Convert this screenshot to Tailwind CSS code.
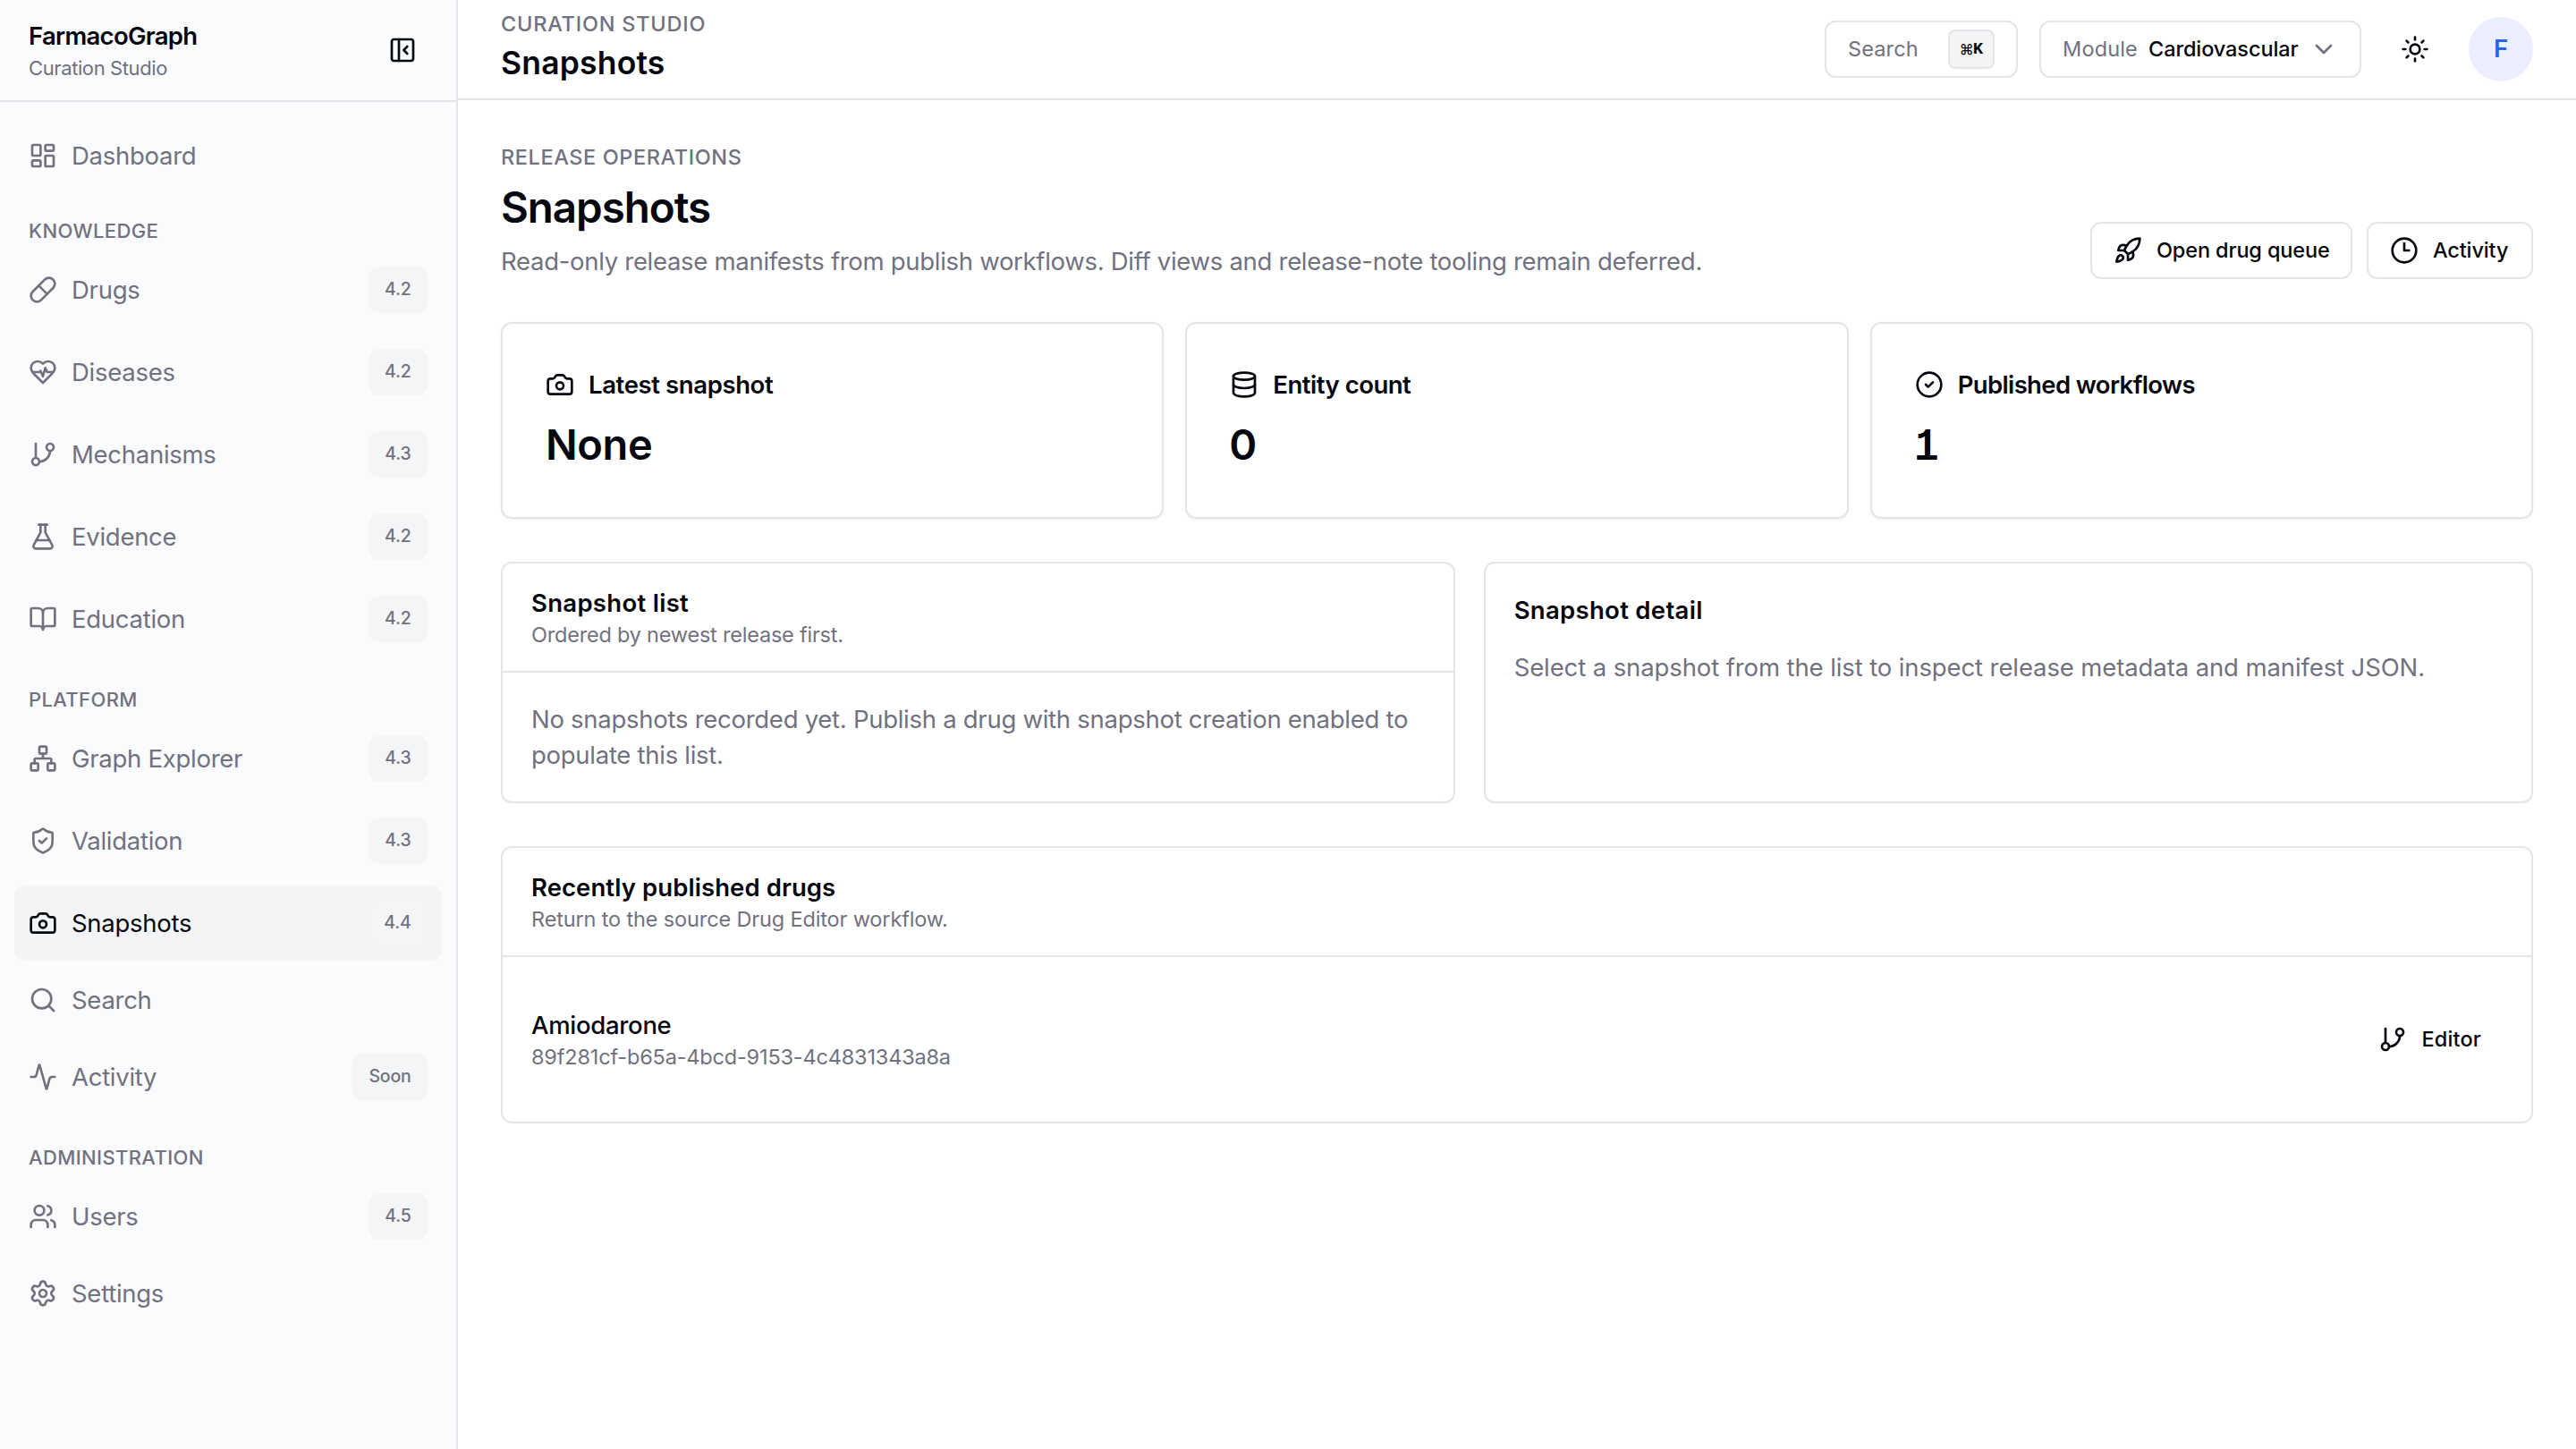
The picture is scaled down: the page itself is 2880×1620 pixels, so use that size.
<!DOCTYPE html>
<html lang="en">
<head>
    <meta charset="UTF-8">
    <title>Snapshots - FarmacoGraph</title>
    <script src="https://cdn.jsdelivr.net/npm/@tailwindcss/browser@4"></script>
</head>
<body class="bg-white text-[#05070f] font-['Inter','Liberation_Sans',sans-serif] antialiased">

<!-- icon sprite -->
<svg class="hidden" xmlns="http://www.w3.org/2000/svg">
    <symbol id="i-dashboard" viewBox="0 0 24 24"><rect x="3" y="3" width="7" height="9" rx="1"/><rect x="14" y="3" width="7" height="5" rx="1"/><rect x="14" y="12" width="7" height="9" rx="1"/><rect x="3" y="16" width="7" height="5" rx="1"/></symbol>
    <symbol id="i-pill" viewBox="0 0 24 24"><path d="m10.5 20.5 10-10a4.95 4.95 0 1 0-7-7l-10 10a4.95 4.95 0 1 0 7 7Z"/><path d="m8.5 8.5 7 7"/></symbol>
    <symbol id="i-heart" viewBox="0 0 24 24"><path d="M19 14c1.49-1.46 3-3.21 3-5.5A5.5 5.5 0 0 0 16.5 3c-1.76 0-3 .5-4.5 2-1.5-1.5-2.74-2-4.5-2A5.5 5.5 0 0 0 2 8.5c0 2.3 1.5 4.05 3 5.5l7 7Z"/><path d="M3.22 12H9.5l.5-1 2 4.5 2-7 1.5 3.5h5.27"/></symbol>
    <symbol id="i-branch" viewBox="0 0 24 24"><path d="M6 3v12"/><circle cx="18" cy="6" r="3"/><circle cx="6" cy="18" r="3"/><path d="M18 9a9 9 0 0 1-9 9"/></symbol>
    <symbol id="i-flask" viewBox="0 0 24 24"><path d="M14 2v6a2 2 0 0 0 .245.96l5.51 10.08A2 2 0 0 1 18 22H6a2 2 0 0 1-1.755-2.96l5.51-10.08A2 2 0 0 0 10 8V2"/><path d="M6.453 15h11.094"/><path d="M8.5 2h7"/></symbol>
    <symbol id="i-book" viewBox="0 0 24 24"><path d="M12 7v14"/><path d="M3 18a1 1 0 0 1-1-1V4a1 1 0 0 1 1-1h5a4 4 0 0 1 4 4 4 4 0 0 1 4-4h5a1 1 0 0 1 1 1v13a1 1 0 0 1-1 1h-6a3 3 0 0 0-3 3 3 3 0 0 0-3-3z"/></symbol>
    <symbol id="i-network" viewBox="0 0 24 24"><rect x="16" y="16" width="6" height="6" rx="1"/><rect x="2" y="16" width="6" height="6" rx="1"/><rect x="9" y="2" width="6" height="6" rx="1"/><path d="M5 16v-3a1 1 0 0 1 1-1h12a1 1 0 0 1 1 1v3"/><path d="M12 12V8"/></symbol>
    <symbol id="i-shield" viewBox="0 0 24 24"><path d="M20 13c0 5-3.5 7.5-7.66 8.95a1 1 0 0 1-.67-.01C7.5 20.5 4 18 4 13V6a1 1 0 0 1 1-1c2 0 4.5-1.2 6.24-2.72a1.17 1.17 0 0 1 1.52 0C14.51 3.81 17 5 19 5a1 1 0 0 1 1 1z"/><path d="m9 12 2 2 4-4"/></symbol>
    <symbol id="i-camera" viewBox="0 0 24 24"><path d="M13.997 4a2 2 0 0 1 1.76 1.05l.486.9A2 2 0 0 0 18.003 7H20a2 2 0 0 1 2 2v9a2 2 0 0 1-2 2H4a2 2 0 0 1-2-2V9a2 2 0 0 1 2-2h1.997a2 2 0 0 0 1.759-1.048l.489-.904A2 2 0 0 1 10.004 4z"/><circle cx="12" cy="13" r="3"/></symbol>
    <symbol id="i-search" viewBox="0 0 24 24"><circle cx="11" cy="11" r="8"/><path d="m21 21-4.34-4.34"/></symbol>
    <symbol id="i-activity" viewBox="0 0 24 24"><path d="M22 12h-2.48a2 2 0 0 0-1.93 1.46l-2.35 8.36a.25.25 0 0 1-.48 0L9.24 2.18a.25.25 0 0 0-.48 0l-2.35 8.36A2 2 0 0 1 4.49 12H2"/></symbol>
    <symbol id="i-users" viewBox="0 0 24 24"><path d="M16 21v-2a4 4 0 0 0-4-4H6a4 4 0 0 0-4 4v2"/><path d="M16 3.128a4 4 0 0 1 0 7.744"/><path d="M22 21v-2a4 4 0 0 0-3-3.87"/><circle cx="9" cy="7" r="4"/></symbol>
    <symbol id="i-settings" viewBox="0 0 24 24"><path d="M9.671 4.136a2.34 2.34 0 0 1 4.659 0 2.34 2.34 0 0 0 3.319 1.915 2.34 2.34 0 0 1 2.33 4.033 2.34 2.34 0 0 0 0 3.831 2.34 2.34 0 0 1-2.33 4.033 2.34 2.34 0 0 0-3.319 1.915 2.34 2.34 0 0 1-4.659 0 2.34 2.34 0 0 0-3.32-1.915 2.34 2.34 0 0 1-2.33-4.033 2.34 2.34 0 0 0 0-3.831A2.34 2.34 0 0 1 6.35 6.051a2.34 2.34 0 0 0 3.319-1.915"/><circle cx="12" cy="12" r="3"/></symbol>
    <symbol id="i-panel" viewBox="0 0 24 24"><rect x="3" y="3" width="18" height="18" rx="2"/><path d="M9 3v18"/><path d="m16 15-3-3 3-3"/></symbol>
    <symbol id="i-chevron" viewBox="0 0 24 24"><path d="m6 9 6 6 6-6"/></symbol>
    <symbol id="i-sun" viewBox="0 0 24 24"><circle cx="12" cy="12" r="4"/><path d="M12 2v2"/><path d="M12 20v2"/><path d="m4.93 4.93 1.41 1.41"/><path d="m17.66 17.66 1.41 1.41"/><path d="M2 12h2"/><path d="M20 12h2"/><path d="m6.34 17.66-1.41 1.41"/><path d="m19.07 4.93-1.41 1.41"/></symbol>
    <symbol id="i-rocket" viewBox="0 0 24 24"><path d="M4.5 16.5c-1.5 1.26-2 5-2 5s3.74-.5 5-2c.71-.84.7-2.13-.09-2.91a2.18 2.18 0 0 0-2.91-.09z"/><path d="m12 15-3-3a22 22 0 0 1 2-3.95A12.88 12.88 0 0 1 22 2c0 2.72-.78 7.5-6 11a22.35 22.35 0 0 1-4 2z"/><path d="M9 12H4s.55-3.03 2-4c1.62-1.08 5 0 5 0"/><path d="M12 15v5s3.03-.55 4-2c1.08-1.62 0-5 0-5"/></symbol>
    <symbol id="i-clock" viewBox="0 0 24 24"><circle cx="12" cy="12" r="10"/><path d="M12 6v6h4"/></symbol>
    <symbol id="i-database" viewBox="0 0 24 24"><ellipse cx="12" cy="5" rx="9" ry="3"/><path d="M3 5v14a9 3 0 0 0 18 0V5"/><path d="M3 12a9 3 0 0 0 18 0"/></symbol>
    <symbol id="i-check" viewBox="0 0 24 24"><circle cx="12" cy="12" r="10"/><path d="m9 12 2 2 4-4"/></symbol>
</svg>

<div class="flex h-screen overflow-hidden">
    <aside class="w-[512px] shrink-0 border-r-2 border-[#e4e5e8] bg-[#fafbfd]">
        <div class="flex h-[114px] items-center justify-between border-b-2 border-[#e4e5e8] px-8">
            <div>
                <p class="text-[27.5px] leading-10 font-semibold tracking-[-0.026em]">FarmacoGraph</p>
                <p class="text-[22px] leading-8 tracking-[-0.018em] text-[#71717f]">Curation Studio</p>
            </div>
            <button class="flex size-14 items-center justify-center">
                <svg class="size-8 fill-none stroke-current stroke-2 [stroke-linecap:round] [stroke-linejoin:round]"><use href="#i-panel"/></svg>
            </button>
        </div>
        <nav id="nav" class="px-4 pt-6"></nav>
    </aside>

    <div class="min-w-0 flex-1">
        <header class="flex h-28 items-center justify-between border-b-2 border-[#e4e5e8] px-12">
            <div>
                <p class="text-[23.5px] leading-8 font-medium tracking-[0.033em] text-[#71717f]">CURATION STUDIO</p>
                <p class="text-[35.5px] leading-[56px] font-semibold tracking-[0.005em]">Snapshots</p>
            </div>
            <div class="flex items-center gap-6">
                <button class="flex h-16 w-[216px] items-center justify-between rounded-xl border-2 border-[#e4e5e8] px-6 text-[23.5px] tracking-[0.005em] text-[#71717f]">
                    Search
                    <kbd class="flex h-11 w-[52px] items-center justify-center rounded-lg border-2 border-[#e4e5e8] bg-[#f3f4f6] font-['Inter',sans-serif] text-[19px] font-medium text-[#05070f]"><span class="-mr-px font-['Noto_Sans','Inter',sans-serif] text-[16px]">⌘</span><span class="font-['Liberation_Mono',monospace] font-bold">K</span></kbd>
                </button>
                <button class="flex h-16 w-[360px] items-center rounded-xl border-2 border-[#e4e5e8] px-6 text-[23.5px]">
                    <span class="tracking-[0.007em] text-[#71717f]">Module</span>
                    <span class="ml-3 font-medium tracking-[-0.004em]">Cardiovascular</span>
                    <svg class="ml-auto size-8 fill-none stroke-[#71717f] stroke-2 [stroke-linecap:round] [stroke-linejoin:round]"><use href="#i-chevron"/></svg>
                </button>
                <button class="flex size-18 items-center justify-center">
                    <svg class="size-8 fill-none stroke-current stroke-2 [stroke-linecap:round] [stroke-linejoin:round]"><use href="#i-sun"/></svg>
                </button>
                <div class="flex size-18 items-center justify-center rounded-full bg-[#ebeffd] text-[27.5px] font-semibold text-[#2463eb]">F</div>
            </div>
        </header>

        <main class="p-12">
            <div class="flex items-end justify-between">
                <div>
                    <p class="text-[23.5px] leading-8 font-medium tracking-[0.025em] text-[#71717f]">RELEASE OPERATIONS</p>
                    <h1 class="mt-2 text-[47.5px] leading-[63px] font-semibold tracking-[-0.022em]">Snapshots</h1>
                    <p class="mt-[9px] text-[27.5px] leading-10 tracking-[-0.0108em] text-[#71717f]">Read-only release manifests from publish workflows. Diff views and release-note tooling remain deferred.</p>
                </div>
                <div class="flex gap-4">
                    <button class="flex h-16 w-[293px] items-center gap-4 rounded-xl border-2 border-[#e4e5e8] px-6 text-[23.5px] font-medium tracking-[-0.006em] whitespace-nowrap">
                        <svg class="size-8 shrink-0 fill-none stroke-current stroke-2 [stroke-linecap:round] [stroke-linejoin:round]"><use href="#i-rocket"/></svg>
                        Open drug queue
                    </button>
                    <button class="flex h-16 w-[186px] items-center gap-4 rounded-xl border-2 border-[#e4e5e8] px-6 text-[23.5px] font-medium tracking-[-0.006em] whitespace-nowrap">
                        <svg class="size-8 shrink-0 fill-none stroke-current stroke-2 [stroke-linecap:round] [stroke-linejoin:round]"><use href="#i-clock"/></svg>
                        Activity
                    </button>
                </div>
            </div>

            <div class="mt-12 grid grid-cols-3 gap-6">
                <div class="h-[220px] rounded-xl border-2 border-[#e4e5e8] p-12 shadow-sm shadow-black/5">
                    <div class="flex items-center gap-4">
                        <svg class="size-8 fill-none stroke-current stroke-2 [stroke-linecap:round] [stroke-linejoin:round]"><use href="#i-camera"/></svg>
                        <h3 class="text-[27.5px] leading-10 font-semibold tracking-[-0.014em]">Latest snapshot</h3>
                    </div>
                    <p class="mt-4 text-[47px] leading-[62px] font-semibold tracking-[-0.008em]">None</p>
                </div>
                <div class="h-[220px] rounded-xl border-2 border-[#e4e5e8] p-12 shadow-sm shadow-black/5">
                    <div class="flex items-center gap-4">
                        <svg class="size-8 fill-none stroke-current stroke-2 [stroke-linecap:round] [stroke-linejoin:round]"><use href="#i-database"/></svg>
                        <h3 class="text-[27.5px] leading-10 font-semibold tracking-[-0.018em]">Entity count</h3>
                    </div>
                    <p class="mt-4 text-[47px] leading-[62px] font-semibold"><span class="-ml-px">0</span></p>
                </div>
                <div class="h-[220px] rounded-xl border-2 border-[#e4e5e8] p-12 shadow-sm shadow-black/5">
                    <div class="flex items-center gap-4">
                        <svg class="size-8 fill-none stroke-current stroke-2 [stroke-linecap:round] [stroke-linejoin:round]"><use href="#i-check"/></svg>
                        <h3 class="text-[27.5px] leading-10 font-semibold tracking-[-0.023em]">Published workflows</h3>
                    </div>
                    <p class="mt-4 text-[47px] leading-[62px] font-semibold [font-feature-settings:'cv01','ss01','tnum']"><span class="-ml-0.5">1</span></p>
                </div>
            </div>

            <div class="mt-12 grid grid-cols-[1fr_1.1fr] gap-8">
                <section class="rounded-xl border-2 border-[#e4e5e8]">
                    <div class="border-b-2 border-[#e4e5e8] px-8 py-6">
                        <h2 class="text-[27.5px] leading-10 font-semibold tracking-[0.011em]">Snapshot list</h2>
                        <p class="text-[23.5px] leading-8 tracking-[-0.009em] text-[#71717f]">Ordered by newest release first.</p>
                    </div>
                    <p class="p-8 text-[27.5px] leading-10 tracking-[-0.01em] text-[#71717f]">No snapshots recorded yet. Publish a drug with snapshot creation enabled to populate this list.</p>
                </section>
                <section class="rounded-xl border-2 border-[#e4e5e8] p-8">
                    <h2 class="text-[27.5px] leading-10 font-semibold tracking-[0.011em]">Snapshot detail</h2>
                    <p class="mt-6 text-[27.5px] leading-10 tracking-[-0.004em] text-[#71717f]">Select a snapshot from the list to inspect release metadata and manifest JSON.</p>
                </section>
            </div>

            <section class="mt-12 rounded-xl border-2 border-[#e4e5e8]">
                <div class="border-b-2 border-[#e4e5e8] px-8 py-6">
                    <h2 class="text-[27.5px] leading-10 font-semibold tracking-[0.003em]">Recently published drugs</h2>
                    <p class="text-[23.5px] leading-8 tracking-[-0.006em] text-[#71717f]">Return to the source Drug Editor workflow.</p>
                </div>
                <div class="flex items-center justify-between px-8 py-14">
                    <div>
                        <p class="text-[27.5px] leading-10 font-medium tracking-[-0.011em]">Amiodarone</p>
                        <p class="text-[23.5px] leading-8 tracking-[-0.0075em] text-[#71717f]">89f281cf-b65a-4bcd-9153-4c4831343a8a</p>
                    </div>
                    <button class="flex h-16 items-center gap-4 px-6 text-[23.5px] font-medium tracking-[0.006em]">
                        <svg class="size-8 fill-none stroke-current stroke-2 [stroke-linecap:round] [stroke-linejoin:round]"><use href="#i-branch"/></svg>
                        Editor
                    </button>
                </div>
            </section>
        </main>
    </div>
</div>

<script>
    const groups = [
        { items: [{ icon: 'dashboard', label: 'Dashboard' }] },
        {
            title: 'KNOWLEDGE',
            items: [
                { icon: 'pill', label: 'Drugs', badge: '4.2' },
                { icon: 'heart', label: 'Diseases', badge: '4.2' },
                { icon: 'branch', label: 'Mechanisms', badge: '4.3' },
                { icon: 'flask', label: 'Evidence', badge: '4.2' },
                { icon: 'book', label: 'Education', badge: '4.2' }
            ]
        },
        {
            title: 'PLATFORM',
            items: [
                { icon: 'network', label: 'Graph Explorer', badge: '4.3' },
                { icon: 'shield', label: 'Validation', badge: '4.3' },
                { icon: 'camera', label: 'Snapshots', badge: '4.4', active: true },
                { icon: 'search', label: 'Search' },
                { icon: 'activity', label: 'Activity', badge: 'Soon' }
            ]
        },
        {
            title: 'ADMINISTRATION',
            items: [
                { icon: 'users', label: 'Users', badge: '4.5' },
                { icon: 'settings', label: 'Settings' }
            ]
        }
    ];

    const renderItem = item => `
        <a class="flex items-center gap-4 rounded-xl px-4 ${item.badge ? 'h-[84px]' : 'h-[72.5px]'} ${item.active ? 'bg-[#f3f4f6] text-[#05070f]' : 'text-[#71717f]'}">
            <svg class="size-8 shrink-0 fill-none stroke-current stroke-2 [stroke-linecap:round] [stroke-linejoin:round]"><use href="#i-${item.icon}"/></svg>
            <span class="text-[27.5px] leading-10 tracking-[-0.01em]">${item.label}</span>
            ${item.badge ? `<span class="ml-auto flex h-[52px] items-center rounded-xl bg-[#f4f5f7] px-[18.5px] pb-px text-[19.5px] font-medium tracking-[-0.01em] text-[#71717f]">${item.badge}</span>` : ''}
        </a>`;

    document.getElementById('nav').innerHTML = groups.map(group => `
        ${group.title ? `<p class="h-[71.7px] px-4 pt-[31.5px] text-[22px] leading-8 font-medium tracking-[0.017em] text-[#71717f]">${group.title}</p>` : ''}
        <div class="flex flex-col gap-2">${group.items.map(renderItem).join('')}</div>`
    ).join('');
</script>
</body>
</html>
